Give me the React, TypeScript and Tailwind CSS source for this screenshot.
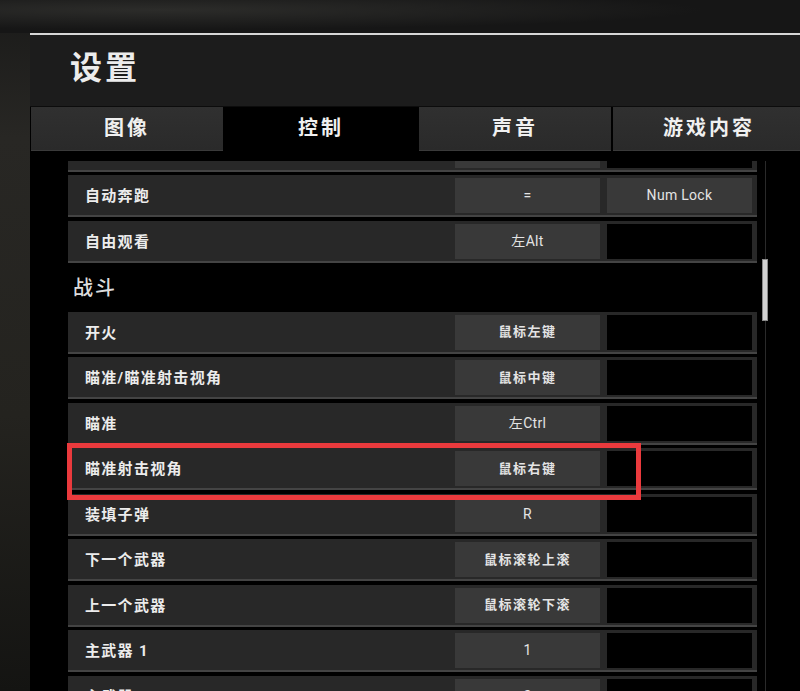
import React from "react";

type Row =
  | { kind: "row"; label: string; k1: string; k2: string; k2filled?: boolean }
  | { kind: "section"; label: string };

const rows: Row[] = [
  { kind: "row", label: "", k1: "", k2: "" },
  { kind: "row", label: "自动奔跑", k1: "=", k2: "Num Lock", k2filled: true },
  { kind: "row", label: "自由观看", k1: "左Alt", k2: "" },
  { kind: "section", label: "战斗" },
  { kind: "row", label: "开火", k1: "鼠标左键", k2: "" },
  { kind: "row", label: "瞄准/瞄准射击视角", k1: "鼠标中键", k2: "" },
  { kind: "row", label: "瞄准", k1: "左Ctrl", k2: "" },
  { kind: "row", label: "瞄准射击视角", k1: "鼠标右键", k2: "" },
  { kind: "row", label: "装填子弹", k1: "R", k2: "" },
  { kind: "row", label: "下一个武器", k1: "鼠标滚轮上滚", k2: "" },
  { kind: "row", label: "上一个武器", k1: "鼠标滚轮下滚", k2: "" },
  { kind: "row", label: "主武器 1", k1: "1", k2: "" },
  { kind: "row", label: "主武器 2", k1: "2", k2: "" },
];

const tabs = ["图像", "控制", "声音", "游戏内容"];

function KeyCell({ text, filled }: { text: string; filled: boolean }) {
  const hasLatin = /[A-Za-z0-9=]/.test(text);
  return (
    <div
      className={`w-[145px] h-[35px] flex items-center justify-center text-[#e4e4e4] ${
        filled ? "bg-[#393939]" : "bg-black"
      } ${hasLatin ? "text-[14px] font-normal tracking-[0.3px]" : "text-[13px] font-bold tracking-[1.5px]"}`}
    >
      {text}
    </div>
  );
}

export default function App() {
  return (
    <div className="relative w-[800px] h-[691px] overflow-hidden flex flex-col bg-[linear-gradient(180deg,#1a1a19_0%,#282724_20%,#24231f_60%,#141412_100%)] [font-family:Roboto,'Noto_Sans_CJK_SC',sans-serif]">
      {/* blurred backdrop strip at top */}
      <div className="h-[33px] shrink-0 bg-[radial-gradient(ellipse_at_20%_30%,#2c2c2a_0%,#161616_60%)]" />

      <div className="flex-1 ml-[30px] flex flex-col min-h-0 bg-black">
        <div className="h-[2px] shrink-0 bg-[#d6d6d6]" />
        {/* Header */}
        <div className="h-[72px] shrink-0 bg-[#1c1c1c] pl-[40px] pb-[6px] flex items-center border-b border-[#0c0c0c]">
          <span className="text-[32px] font-bold tracking-[3px] text-[#ececec]">设置</span>
        </div>
        {/* Tabs */}
        <div className="h-[44px] shrink-0 flex gap-[2px] pl-[1px] bg-black">
          {tabs.map((t, i) => (
            <div
              key={t}
              className={`w-[192px] shrink-0 flex items-center justify-center pb-[2px] text-[20px] font-bold tracking-[3px] text-[#f0f0f0] ${
                i === 1 ? "bg-black" : "bg-[linear-gradient(180deg,#303030,#2a2a2a)] border-b border-[#3a3a3a]"
              }`}
            >
              {t}
            </div>
          ))}
        </div>
        {/* Content */}
        <div className="flex-1 min-h-0 flex bg-black">
          <div className="ml-[38px] w-[689px] mt-[10px] overflow-hidden">
            <div className="-mt-[31.5px] flex flex-col gap-[3.5px]">
              {rows.map((r, i) =>
                r.kind === "section" ? (
                  <div
                    key={i}
                    className="h-[42px] shrink-0 flex items-center pl-[5px] pt-[2px] text-[20px] font-medium tracking-[2px] text-[#dcdcdc]"
                  >
                    {r.label}
                  </div>
                ) : (
                  <div
                    key={i}
                    className="h-[42px] shrink-0 flex items-start pt-[3px] pl-[17px] pr-[5px] bg-[#282828] border-b-2 border-[#444444]"
                  >
                    <span className="flex-1 h-[35px] flex items-center pt-[2px] text-[15px] font-bold tracking-[1.3px] text-[#ececec]">
                      {r.label}
                    </span>
                    <KeyCell text={r.k1} filled />
                    <div className="w-[7px]" />
                    <KeyCell text={r.k2} filled={!!r.k2filled} />
                  </div>
                )
              )}
            </div>
          </div>
          {/* Scrollbar */}
          <div className="relative ml-[5px] w-[6px]">
            <div className="absolute left-[3px] top-[10px] bottom-0 w-[1px] bg-[#2a2a2a]" />
            <div className="relative mt-[108px] h-[62px] w-[6px] bg-[#d2d2d2] border border-[#8a8a8a]" />
          </div>
        </div>
      </div>

      {/* Red highlight annotation */}
      <div className="absolute left-[67px] top-[443px] w-[574px] h-[57px] border-[5px] border-[#ea3a3d]" />
    </div>
  );
}
